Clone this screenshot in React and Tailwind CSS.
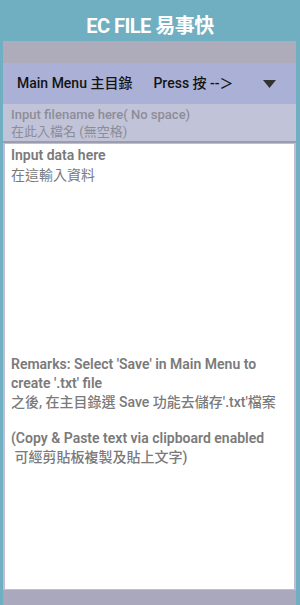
export default function App() {
  return (
    <div className="h-[605px] w-[300px] bg-[#70afc1] flex flex-col overflow-hidden font-['Roboto','Noto_Sans_CJK_TC',sans-serif]">
      {/* Header */}
      <div className="h-[41px] flex items-center justify-center pt-[11px]">
        <h1 className="text-white text-[20px] font-bold tracking-tight">EC FILE 易事快</h1>
      </div>

      {/* Panel */}
      <div className="flex-1 ml-[3px] mr-[4px] flex flex-col bg-[#bdbed6]">
        <div className="h-[22px] bg-[#aeabbb]"></div>

        {/* Menu bar */}
        <div className="h-[41px] bg-[#abb0d7] flex items-center pl-[14px] pr-[20px] text-[14px] font-medium text-[#141414]">
          <span>Main Menu 主目錄</span>
          <span className="ml-[21px]">Press 按 --＞</span>
          <svg className="ml-auto w-[13px] h-[8px]" viewBox="0 0 13 8">
            <path d="M0 0h13L6.5 8z" fill="#333" />
          </svg>
        </div>

        {/* Filename input */}
        <div className="h-[39px] bg-[#c1c3d8] border-b-2 border-[#9c9cae] px-[8px] pt-[2px] text-[13px] leading-[17px] text-[#8d8d98]">
          <div className="font-medium">Input filename here( No space)</div>
          <div>在此入檔名 (無空格)</div>
        </div>

        {/* Data area */}
        <div className="flex-1 bg-white mx-[2px] mt-[1px] px-[6px] pt-[1px] text-[14px] leading-[20px] text-[#7a7a7a]">
          <div className="font-semibold">Input data here</div>
          <div>在這輸入資料</div>
          <div className="mt-[170px] leading-[19px]">
            <div className="font-semibold">Remarks: Select 'Save' in Main Menu to</div>
            <div className="font-semibold">create '.txt' file</div>
            <div className="font-medium">之後, 在主目錄選 Save 功能去儲存'.txt'檔案</div>
            <div className="h-[17px]"></div>
            <div className="font-semibold">(Copy &amp; Paste text via clipboard enabled</div>
            <div className="font-medium">&nbsp;可經剪貼板複製及貼上文字)</div>
          </div>
        </div>

        <div className="h-[15px] bg-[#a9a8bd] mt-[1px]"></div>
      </div>
    </div>
  );
}
